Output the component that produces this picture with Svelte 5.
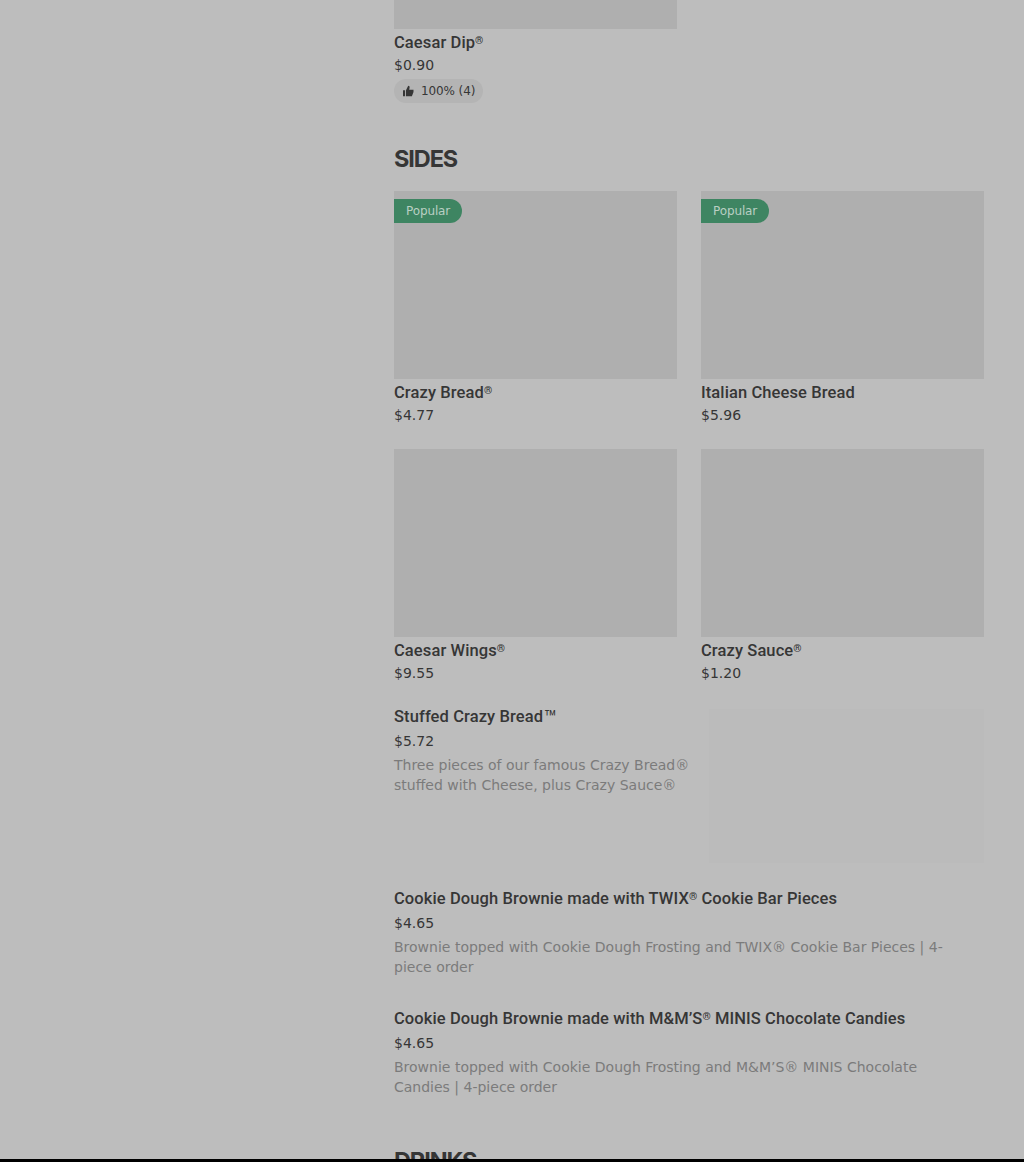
<script>
    const sides = [
        { name: 'Crazy Bread®', price: '$4.77', popular: true },
        { name: 'Italian Cheese Bread', price: '$5.96', popular: true },
        { name: 'Caesar Wings®', price: '$9.55' },
        { name: 'Crazy Sauce®', price: '$1.20' }
    ]

    const moreSides = [
        {
            name: 'Stuffed Crazy Bread™',
            price: '$5.72',
            text: 'Three pieces of our famous Crazy Bread® stuffed with Cheese, plus Crazy Sauce®',
            photo: true
        },
        {
            name: 'Cookie Dough Brownie made with TWIX® Cookie Bar Pieces',
            price: '$4.65',
            text: 'Brownie topped with Cookie Dough Frosting and TWIX® Cookie Bar Pieces | 4-piece order'
        },
        {
            name: 'Cookie Dough Brownie made with M&M’S® MINIS Chocolate Candies',
            price: '$4.65',
            text: 'Brownie topped with Cookie Dough Frosting and M&M’S® MINIS Chocolate Candies | 4-piece order'
        }
    ]
</script>

<!-- the registered mark is set small and raised in item names -->
{#snippet itemName(name)}
    <h3>{#each name.split(/(®|™)/) as part}{#if part === '®'}<span class="mark">®</span>{:else if part === '™'}<span class="trade">™</span>{:else}{part}{/if}{/each}</h3>
{/snippet}

<div class="page">
    <main>
        <section class="dips">
            <div class="card">
                <div class="photo cut"></div>
                {@render itemName('Caesar Dip®')}
                <p class="price">$0.90</p>
                <div class="rating">
                    <svg width="12" height="12" viewBox="0 0 12 12" fill="currentColor">
                        <path d="M1 5.2h2.1v6H1zM4 11.2V5.2L6.2 0.8c1.1 0 1.6 0.8 1.4 1.8L7.2 4.8h4.3v2.2L9.9 11.2z" />
                    </svg>
                    <span>100% (4)</span>
                </div>
            </div>
        </section>

        <section>
            <h2>SIDES</h2>
            <div class="grid">
                {#each sides as item}
                    <div class="card">
                        <div class="photo">
                            {#if item.popular}
                                <span class="popular">Popular</span>
                            {/if}
                        </div>
                        {@render itemName(item.name)}
                        <p class="price">{item.price}</p>
                    </div>
                {/each}
            </div>
            <div class="list">
                {#each moreSides as item}
                    <div class="row">
                        <div class="info">
                            {@render itemName(item.name)}
                            <p class="price">{item.price}</p>
                            <p class="text">{item.text}</p>
                        </div>
                        {#if item.photo}
                            <div class="thumb"></div>
                        {/if}
                    </div>
                {/each}
            </div>
        </section>

        <section class="drinks">
            <h2>DRINKS</h2>
        </section>
    </main>
    <div class="bottomBar"></div>
</div>

<style>
    :global(body) {
        background: #bdbdbd;
    }

    .page {
        position: relative;
        box-sizing: border-box;
        height: 1162px;
        overflow: hidden;
        padding: 0 40px 0 394px;
        background: #bdbdbd;
        color: #363636;
        font-family: "DejaVu Sans", sans-serif;
    }

    h2, h3, p {
        margin: 0;
    }

    h2 {
        font-family: Inter, sans-serif;
        font-size: 23.5px;
        font-weight: 700;
        line-height: 32px;
        letter-spacing: -1.1px;
    }

    h3 {
        box-sizing: border-box;
        height: 20px;
        padding-top: 1px;
        font-family: Roboto, sans-serif;
        font-size: 16.5px;
        font-weight: 500;
        line-height: 20px;
        letter-spacing: 0.1px;
        white-space: nowrap;
    }

    .mark {
        font-size: 10.5px;
        line-height: 0;
        vertical-align: 4px;
        letter-spacing: 0;
    }

    .trade {
        margin-left: 1px;
        font-size: 21px;
        font-weight: 400;
        line-height: 0;
        vertical-align: -3px;
    }

    .dips {
        width: 283px;
        height: 143px;
    }

    .card .photo {
        height: 188px;
        margin-bottom: 3px;
        background: #afafaf;
    }

    .card .cut {
        height: 29px;
    }

    .price {
        margin-top: 3px;
        font-size: 14px;
        line-height: 20px;
    }

    .rating {
        display: inline-flex;
        align-items: center;
        gap: 7px;
        height: 24px;
        margin-top: 4px;
        padding: 0 8px;
        border-radius: 12px;
        background: #b4b4b4;
        font-size: 12px;
        line-height: 24px;
        letter-spacing: -0.1px;
    }

    .grid {
        display: grid;
        grid-template-columns: 1fr 1fr;
        gap: 24px;
        margin-top: 16px;
    }

    .popular {
        display: inline-block;
        margin-top: 8px;
        padding: 0 12px;
        border-radius: 0 12px 12px 0;
        background: #3e8562;
        color: #b9cfc3;
        font-size: 12px;
        line-height: 24px;
        letter-spacing: -0.12px;
        vertical-align: top;
    }

    .list {
        margin-top: 23px;
    }

    .row {
        display: flex;
        gap: 16px;
        margin-bottom: 31px;
    }

    .row .price {
        margin-top: 5px;
    }

    .info {
        flex: 1;
        min-width: 0;
    }

    .text {
        max-width: 566px;
        margin-top: 4px;
        color: #7b7b7b;
        font-size: 14px;
        line-height: 20px;
    }

    .thumb {
        width: 275px;
        height: 154px;
        margin-top: 3px;
        margin-bottom: -6px;
        background: #bbbbbb;
    }

    .drinks {
        margin-top: 48px;
    }

    .bottomBar {
        position: absolute;
        left: 0;
        right: 0;
        bottom: 0;
        height: 3px;
        background: #000;
    }
</style>
